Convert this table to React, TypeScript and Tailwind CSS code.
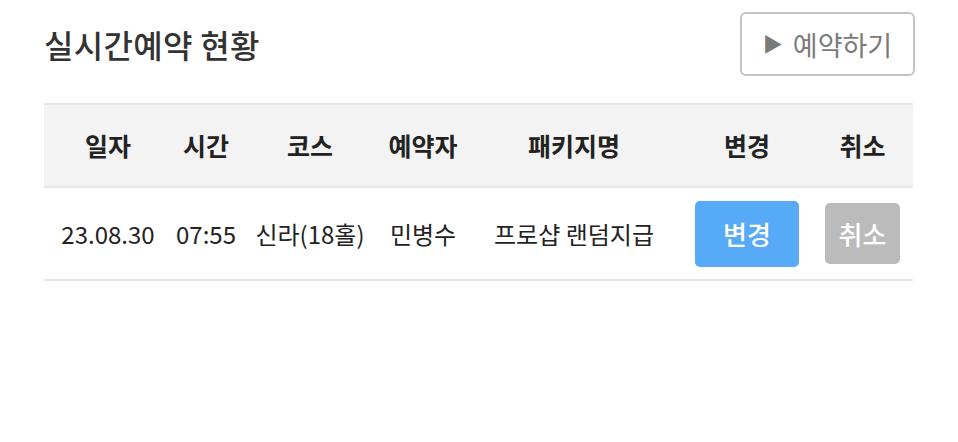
const cols = "grid grid-cols-[128px_68px_140px_86px_216px_130px_101px]";

const headers = ["일자", "시간", "코스", "예약자", "패키지명", "변경", "취소"];

export default function App() {
    return (
        <div
            className="w-[958px] h-[442px] bg-white px-[44px] pt-[12px] text-[#333]"
            style={{ fontFamily: '"Noto Sans CJK KR", "Noto Sans", sans-serif' }}
        >
            {/* Title row */}
            <div className="flex items-center justify-between h-[64px]">
                <h1 className="text-[32px] font-medium tracking-[0.3px] text-[#333] leading-none">
                    실시간예약 현황
                </h1>
                <button className="flex items-center gap-[10px] h-[64px] w-[175px] justify-center border-2 border-[#c4c4c4] rounded-[6px] text-[#7a7a7a] text-[27px] leading-none mr-[-1px]">
                    <span className="text-[20px]">▶</span>
                    <span>예약하기</span>
                </button>
            </div>

            {/* Table */}
            <div className="mt-[27px] w-[869px]">
                <div className={`${cols} h-[85px] items-center bg-[#f3f3f3] border-t-2 border-b-2 border-[#e6e6e6]`}>
                    {headers.map((h) => (
                        <div key={h} className="text-center text-[25px] font-bold text-[#222]">
                            {h}
                        </div>
                    ))}
                </div>
                <div className={`${cols} h-[93px] items-center border-b-2 border-[#e6e6e6] text-[24px] text-[#222]`}>
                    <div className="text-center">23.08.30</div>
                    <div className="text-center">07:55</div>
                    <div className="text-center whitespace-nowrap">신라(18홀)</div>
                    <div className="text-center">민병수</div>
                    <div className="text-center whitespace-nowrap">프로샵 랜덤지급</div>
                    <div className="flex justify-center">
                        <button className="w-[104px] h-[66px] rounded-[5px] bg-[#56aaf6] text-white text-[26px] font-medium">
                            변경
                        </button>
                    </div>
                    <div className="flex justify-center">
                        <button className="w-[75px] h-[61px] rounded-[5px] bg-[#bbbbbb] text-white text-[26px] font-medium">
                            취소
                        </button>
                    </div>
                </div>
            </div>
        </div>
    );
}
